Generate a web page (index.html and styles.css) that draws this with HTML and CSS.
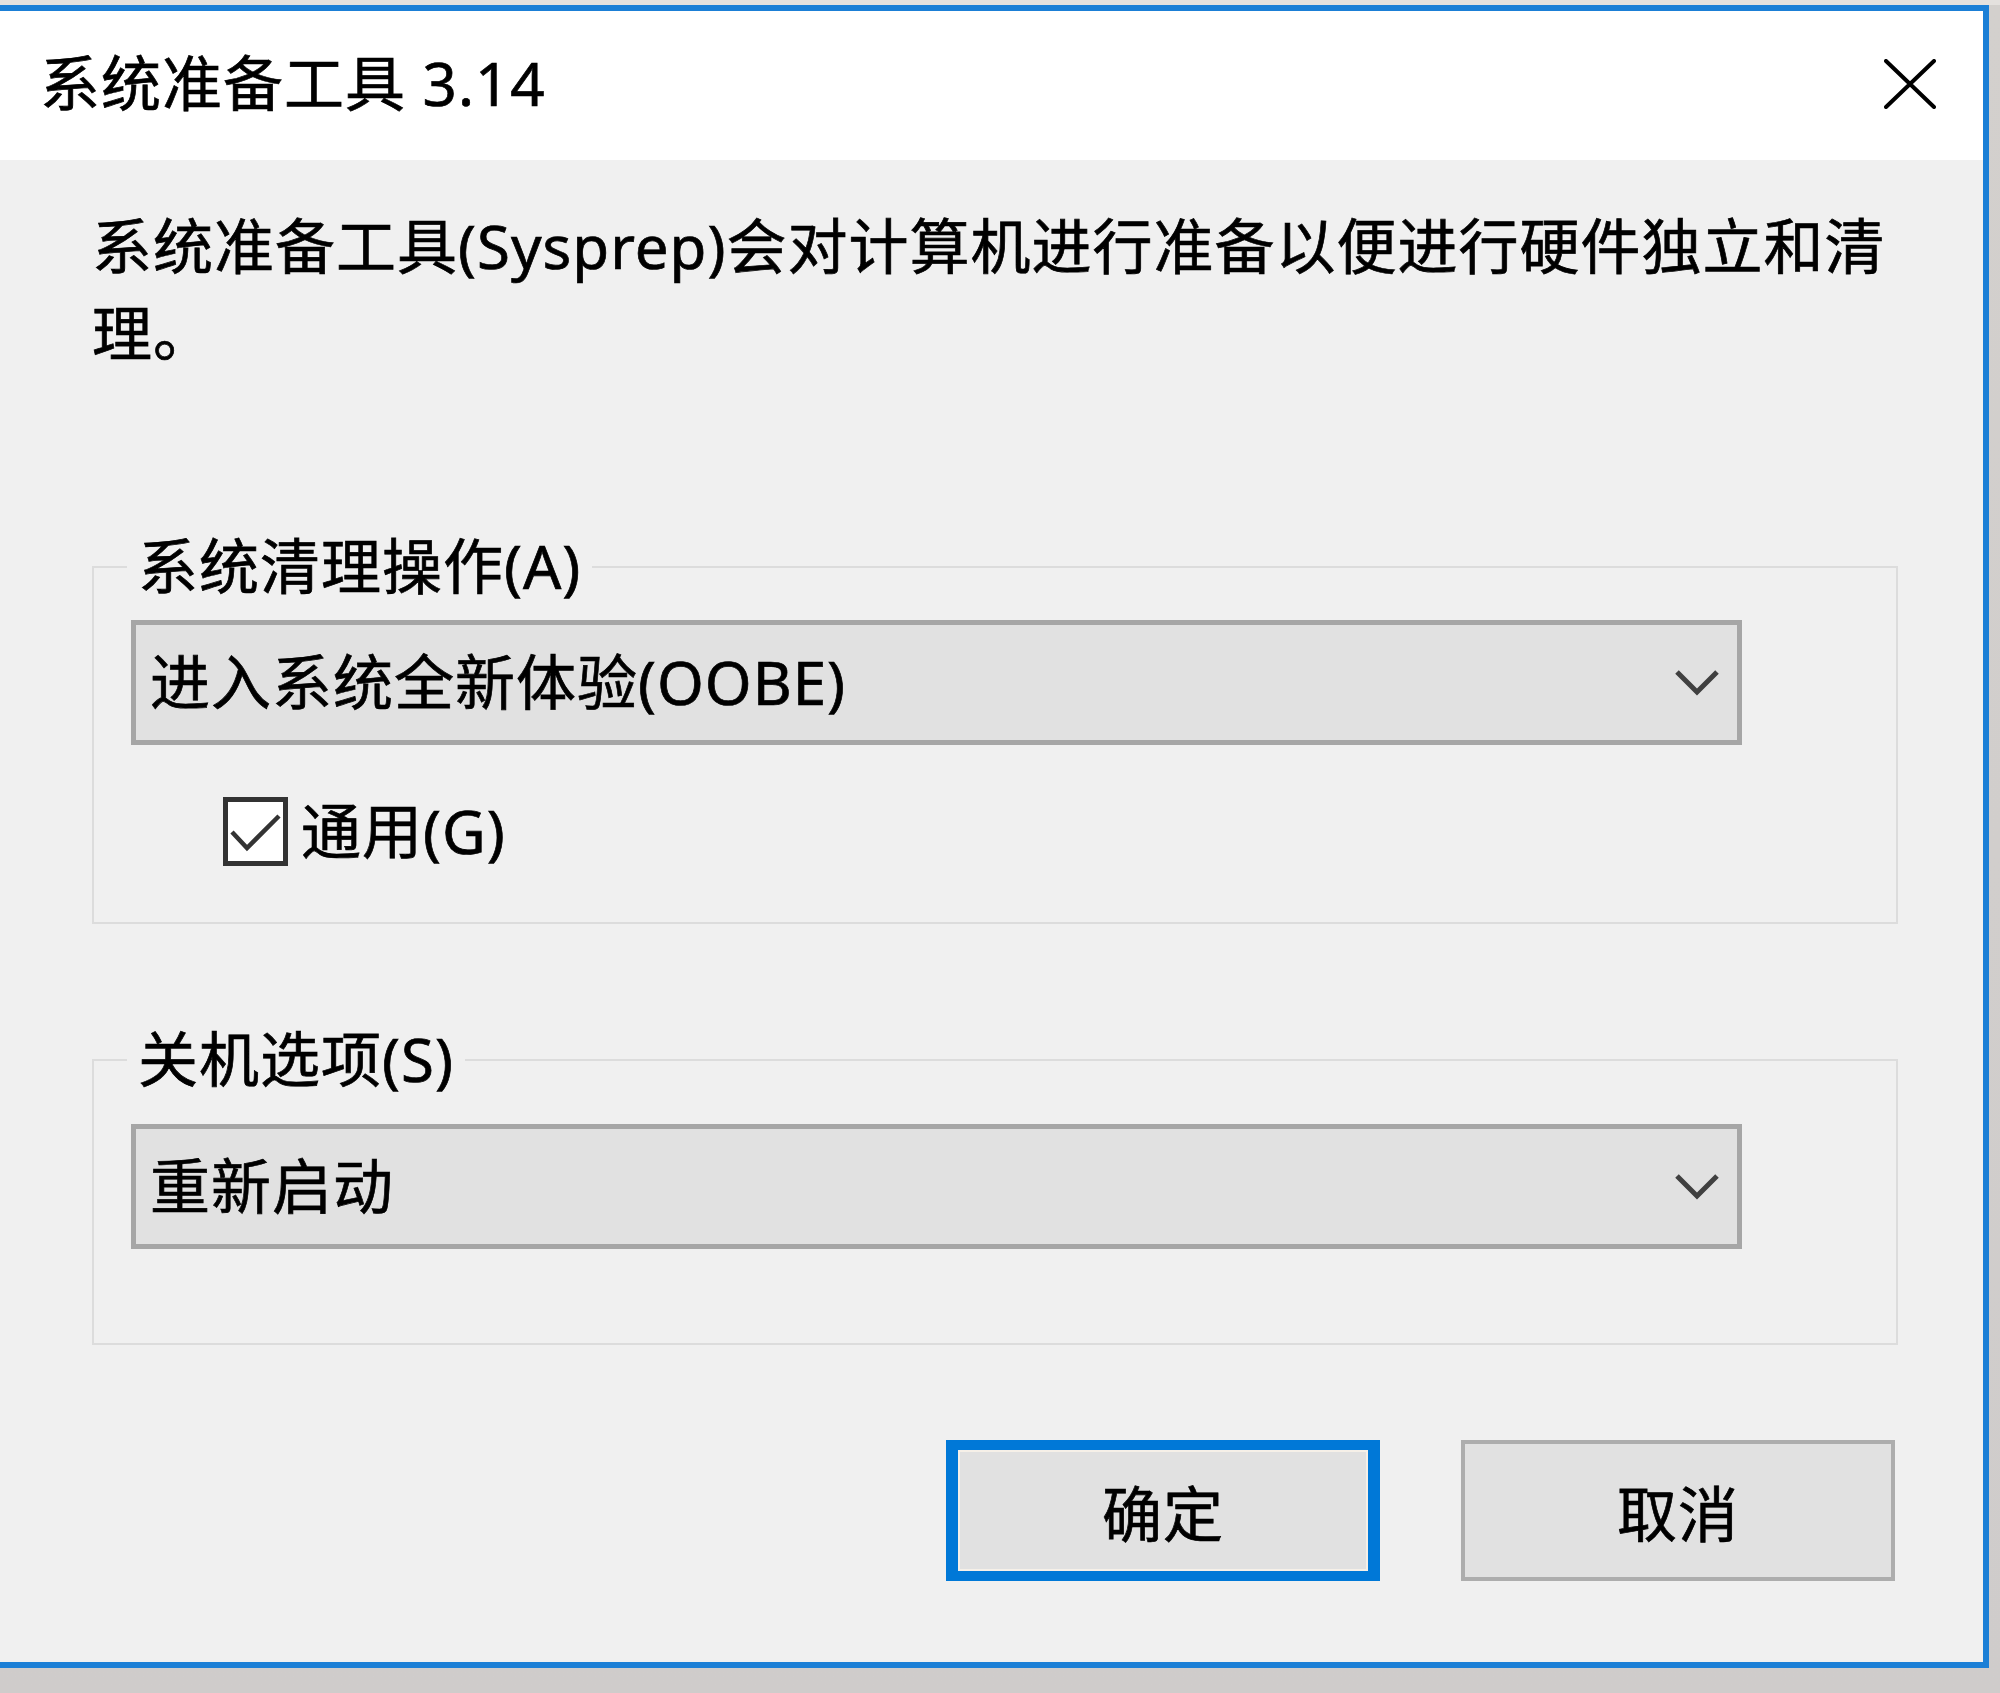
FILE: index.html
```html
<!DOCTYPE html>
<html lang="zh-CN">
<head>
<meta charset="utf-8">
<title>系统准备工具 3.14</title>
<link rel="stylesheet" href="styles.css">
</head>
<body>
<div class="window">
  <div class="titlebar">
    <span class="title">系统准备工具 3.14</span>
    <button class="close" aria-label="关闭">
      <svg width="52" height="50" viewBox="0 0 52 50"><path d="M2 2 L50 48 M50 2 L2 48" stroke="#000" stroke-width="4" stroke-linecap="round" fill="none"/></svg>
    </button>
  </div>
  <div class="content">
    <p class="desc">系统准备工具(Sysprep)会对计算机进行准备以便进行硬件独立和清理。</p>

    <fieldset class="group group-cleanup">
      <legend class="group-label">系统清理操作(A)</legend>
      <div class="select">
        <span class="select-value">进入系统全新体验(OOBE)</span>
        <svg class="chevron" width="46" height="28" viewBox="0 0 46 28"><path d="M3 3 L23 23 L43 3" stroke="#404040" stroke-width="5" fill="none"/></svg>
      </div>
      <label class="check">
        <span class="check-box">
          <svg width="55" height="58" viewBox="0 0 55 58"><path d="M4 29 L19 45 L51 13" stroke="#333" stroke-width="4.5" fill="none"/></svg>
        </span>
        <span class="check-label">通用(G)</span>
      </label>
    </fieldset>

    <fieldset class="group group-shutdown">
      <legend class="group-label">关机选项(S)</legend>
      <div class="select">
        <span class="select-value">重新启动</span>
        <svg class="chevron" width="46" height="28" viewBox="0 0 46 28"><path d="M3 3 L23 23 L43 3" stroke="#404040" stroke-width="5" fill="none"/></svg>
      </div>
    </fieldset>

    <div class="buttons">
      <button class="btn btn-default">确定</button>
      <button class="btn">取消</button>
    </div>
  </div>
</div>
</body>
</html>
```

FILE: styles.css
```css
* { box-sizing: border-box; }

html, body {
  margin: 0;
  padding: 0;
}

body {
  width: 2000px;
  height: 1693px;
  overflow: hidden;
  background: linear-gradient(#e4e1de 0, #e4e1de 5px, #d3d0cd 5px, #cfcccb 100%);
  font-family: "Noto Sans", "Noto Sans CJK SC", sans-serif;
  letter-spacing: 1px;
  color: #000;
  -webkit-text-stroke: 0.7px #000;
}

.window {
  margin-top: 5px;
  width: 1989px;
  height: 1663px;
  border: 6px solid #1b7fd6;
  border-left: none;
  background: #f0f0f0;
  display: flex;
  flex-direction: column;
}

.titlebar {
  height: 149px;
  flex: none;
  background: #fff;
  display: flex;
  align-items: center;
  justify-content: space-between;
  padding: 0 47px 4px 40px;
}

.title {
  font-size: 60px;
  line-height: 87px;
  white-space: nowrap;
}

.close {
  border: none;
  background: transparent;
  padding: 0;
  width: 52px;
  height: 50px;
  display: flex;
}

.content {
  flex: 1;
  padding: 43px 0 0 92px;
  font-size: 60px;
  line-height: 87px;
}

.desc {
  margin: 0;
  width: 1820px;
}

.group {
  margin: 0;
  width: 1806px;
  border: 2px solid #dcdcdc;
  padding: 0 0 0 37px;
  min-inline-size: 0;
}

.group-cleanup {
  margin-top: 146px;
  padding-top: 10px;
  padding-bottom: 47px;
}

.group-shutdown {
  margin-top: 92px;
  padding-top: 21px;
  padding-bottom: 94px;
}

.group-label {
  margin-left: -4px;
  padding: 0 11px;
  line-height: 87px;
}

.select {
  width: 1611px;
  height: 125px;
  border: 5px solid #a6a6a6;
  background: #e1e1e1;
  display: flex;
  align-items: center;
  justify-content: space-between;
  padding: 0 17px 0 14px;
}

.select-value {
  white-space: nowrap;
}

.chevron {
  flex: none;
}

.check {
  display: flex;
  align-items: center;
  margin: 43px 0 0 92px;
}

.check-box {
  width: 65px;
  height: 69px;
  border: 5px solid #333;
  background: #fff;
  display: flex;
  align-items: center;
  justify-content: center;
  -webkit-text-stroke: 0;
}

.check-label {
  margin-left: 13px;
}

.buttons {
  display: flex;
  justify-content: flex-end;
  gap: 81px;
  margin-top: 95px;
  padding-right: 88px;
}

.btn {
  width: 434px;
  height: 141px;
  border: 4px solid #adadad;
  background: #e1e1e1;
  font-family: "Noto Sans", "Noto Sans CJK SC", sans-serif;
  font-size: 60px;
  letter-spacing: 1px;
  color: #000;
  -webkit-text-stroke: 0.7px #000;
  padding: 0;
}

.btn-default {
  border: 10px solid #0078d7;
  border-left-width: 12px;
  border-right-width: 12px;
  box-shadow: inset 0 0 0 2px #f6f0e8;
}
```
